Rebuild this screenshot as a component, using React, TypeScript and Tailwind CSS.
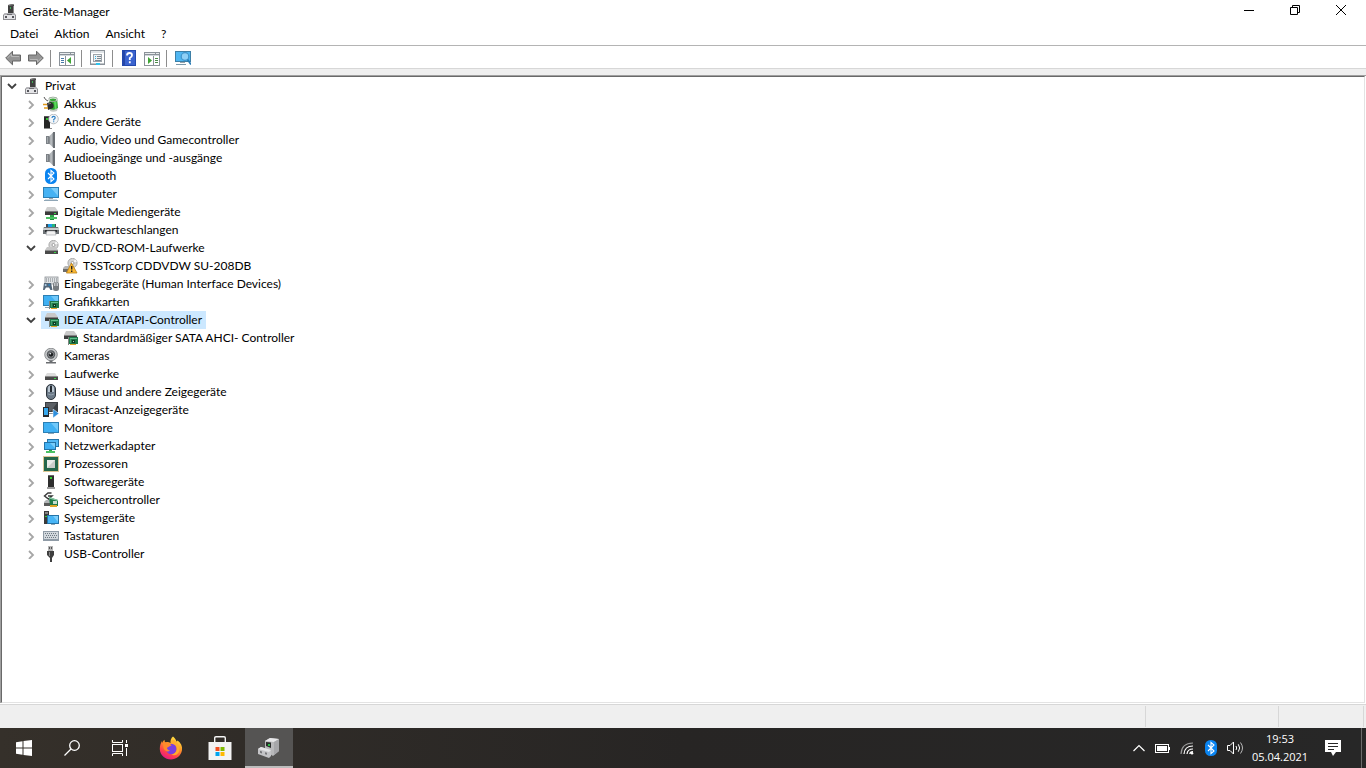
// src/App.tsx
import React, { useState } from 'react';

type Device = {
    name: string;
    icon: string;
    children?: Device[];
};

const devices: Device[] = [
    { name: 'Akkus', icon: 'battery', children: [] },
    { name: 'Andere Geräte', icon: 'unknown', children: [] },
    { name: 'Audio, Video und Gamecontroller', icon: 'speaker', children: [] },
    { name: 'Audioeingänge und -ausgänge', icon: 'speaker', children: [] },
    { name: 'Bluetooth', icon: 'bluetooth', children: [] },
    { name: 'Computer', icon: 'computer', children: [] },
    { name: 'Digitale Mediengeräte', icon: 'media', children: [] },
    { name: 'Druckwarteschlangen', icon: 'printer', children: [] },
    {
        name: 'DVD/CD-ROM-Laufwerke',
        icon: 'disc',
        children: [{ name: 'TSSTcorp CDDVDW SU-208DB', icon: 'discWarning' }],
    },
    { name: 'Eingabegeräte (Human Interface Devices)', icon: 'hid', children: [] },
    { name: 'Grafikkarten', icon: 'graphics', children: [] },
    {
        name: 'IDE ATA/ATAPI-Controller',
        icon: 'ide',
        children: [{ name: 'Standardmäßiger SATA AHCI- Controller', icon: 'ide' }],
    },
    { name: 'Kameras', icon: 'camera', children: [] },
    { name: 'Laufwerke', icon: 'drive', children: [] },
    { name: 'Mäuse und andere Zeigegeräte', icon: 'mouse', children: [] },
    { name: 'Miracast-Anzeigegeräte', icon: 'miracast', children: [] },
    { name: 'Monitore', icon: 'monitor', children: [] },
    { name: 'Netzwerkadapter', icon: 'network', children: [] },
    { name: 'Prozessoren', icon: 'cpu', children: [] },
    { name: 'Softwaregeräte', icon: 'software', children: [] },
    { name: 'Speichercontroller', icon: 'storage', children: [] },
    { name: 'Systemgeräte', icon: 'system', children: [] },
    { name: 'Tastaturen', icon: 'keyboard', children: [] },
    { name: 'USB-Controller', icon: 'usb', children: [] },
];

const root: Device = { name: 'Privat', icon: 'pc', children: devices };

// small green circuit board, shared by several icons
const Board = () => (
    <>
        <rect x="6" y="7" width="1" height="8" fill="#7f8580" />
        <rect x="7" y="7" width="9" height="7" fill="#1f7a4a" />
        <rect x="8" y="8" width="7" height="1" fill="#63bd8d" />
        <rect x="8" y="9" width="1" height="4" fill="#3f9c6c" />
        <rect x="10" y="10" width="3" height="3" fill="#0d3d24" />
        <rect x="11" y="11" width="1" height="1" fill="#9fd8b4" />
        <rect x="8" y="14" width="6" height="1" fill="#e0a526" />
    </>
);

const Disc = () => (
    <>
        <circle cx="10.5" cy="5" r="4.6" fill="#d6d6d6" stroke="#9a9a9a" strokeWidth="0.8" />
        <path d="M10.5 5 L13 1.2 A4.5 4.5 0 0 1 14.8 3.8Z" fill="#f7f7f7" />
        <circle cx="10.5" cy="5" r="1.5" fill="#fff" stroke="#8f8f8f" strokeWidth="0.8" />
    </>
);

const icons: Record<string, React.ReactNode> = {
    pc: (
        <>
            <path d="M6 1 L11 0 L12 1 V10 H6Z" fill="#3f3f3f" />
            <path d="M6 1 L11 0 L12 1 L7 2Z" fill="#777" />
            <path d="M11 2 H12 V9 H11Z" fill="#8a8a8a" />
            <rect x="8" y="3" width="1" height="2" fill="#3fae55" />
            <path d="M3 9 H12 L14 11 V16 H1 V11Z" fill="#8e8e92" />
            <path d="M3 9 H12 L13 11 H2Z" fill="#b4b4b8" />
            <rect x="2" y="11" width="11" height="4" fill="#e4e4e7" />
            <rect x="3" y="12" width="2" height="2" fill="#55555a" />
            <rect x="10" y="12" width="2" height="2" fill="#55555a" />
            <rect x="5" y="10" width="5" height="1" fill="#6f6f73" />
        </>
    ),
    battery: (
        <>
            <path d="M6 2 Q10 0 14 2 L15 12 Q11 16 7 14Z" fill="#2fa32f" />
            <path d="M6 2 Q10 0 14 2 V5 Q10 6 6 5Z" fill="#e4ebe4" stroke="#8b938b" strokeWidth="0.6" />
            <path d="M7 3 Q10 2 13 3 V4.4 Q10 5.4 7 4.4Z" fill="#37a837" />
            <path d="M11 6 L13.5 6 L13.5 13 L12 14Z" fill="#5ad95a" />
            <path d="M7 13 Q11 15 15 12 L14 15 Q10 16.5 7 15Z" fill="#c4c9c4" />
            <path d="M1 1 Q2 4 5 5" fill="none" stroke="#555" strokeWidth="1" />
            <path d="M4 7 L8 6 Q12 8 10 12 L5 14 Z" fill="#2b2b2b" />
            <path d="M0 8.5 H4 M1 12 H5" stroke="#e09a1c" strokeWidth="1.5" />
            <path d="M5 8 L8 7.4" stroke="#777" strokeWidth="1" />
        </>
    ),
    unknown: (
        <>
            <path d="M1 2 H7 V14 H1Z" fill="#262626" />
            <path d="M1 2 H7 V3 H1Z" fill="#5a5a5a" />
            <rect x="3" y="4" width="2" height="2" fill="#35c235" />
            <rect x="1" y="14" width="8" height="1" fill="#8c8c8c" />
            <circle cx="10.5" cy="5" r="4.8" fill="#f4f6f8" stroke="#a8adb2" strokeWidth="0.8" />
            <path d="M9 4 Q9 2.4 10.6 2.4 Q12.2 2.4 12.2 3.8 Q12.2 4.7 10.7 5.5 V6.4 M10.7 7.2 V8.2" fill="none" stroke="#2a7fc6" strokeWidth="1.1" />
        </>
    ),
    speaker: (
        <>
            <defs>
                <linearGradient id="cone" x1="0" y1="0" x2="1" y2="0">
                    <stop offset="0" stopColor="#74797e" />
                    <stop offset="0.5" stopColor="#c3c7ca" />
                    <stop offset="1" stopColor="#8d9297" />
                </linearGradient>
            </defs>
            <rect x="3" y="4" width="3" height="8" fill="#7c8186" />
            <rect x="4" y="5" width="1" height="6" fill="#a4a9ad" />
            <path d="M6 4.5 L10 0.5 V15.5 L6 11.5Z" fill="url(#cone)" />
            <path d="M10 0 H12 V16 H10Z" fill="#6b7075" />
        </>
    ),
    bluetooth: (
        <>
            <rect x="2" y="0" width="12" height="16" rx="5.5" fill="#0a84f0" />
            <path d="M5 5 L11 11 L8 13.6 V2.4 L11 5 L5 11" fill="none" stroke="#fff" strokeWidth="1.1" />
        </>
    ),
    computer: (
        <>
            <rect x="0" y="1" width="16" height="11" fill="#2c7fb4" />
            <rect x="1" y="2" width="14" height="9" fill="#46b2f3" />
            <path d="M8 2 H15 V10Z" fill="#7accfa" />
            <rect x="6" y="12" width="4" height="1" fill="#9aa3aa" />
            <rect x="1" y="14" width="14" height="1" fill="#8fa6b6" />
            <rect x="2" y="13" width="12" height="1" fill="#d2dbe2" />
        </>
    ),
    media: (
        <>
            <path d="M4 3 H12 L15 7 H2Z" fill="#cfcfcf" />
            <rect x="2" y="7" width="13" height="4" fill="#3b3b3b" />
            <rect x="2" y="7" width="13" height="1" fill="#777" />
            <rect x="11" y="9" width="2" height="1" fill="#38d548" />
            <rect x="7" y="11" width="4" height="3" fill="#2ea84a" />
            <rect x="3" y="13" width="11" height="2" fill="#4cc164" />
            <rect x="7" y="15" width="4" height="1" fill="#1f8b3b" />
        </>
    ),
    printer: (
        <>
            <rect x="3" y="2" width="10" height="3" fill="#3f4a54" />
            <rect x="5" y="2" width="4" height="3" fill="#1a9dea" />
            <rect x="9" y="2" width="3" height="3" fill="#24b47c" />
            <path d="M1 5 H15 L16 7 V12 H0 V7Z" fill="#6d7276" />
            <rect x="0" y="6" width="16" height="2" fill="#c9ccce" />
            <rect x="2" y="8" width="12" height="2" fill="#2d2f31" />
            <path d="M4 9 H12 L13 13 H3Z" fill="#f2f2f2" stroke="#9ba0a4" strokeWidth="0.6" />
        </>
    ),
    disc: (
        <>
            <Disc />
            <path d="M4 7 H13 L15 10 H2Z" fill="#c7c7c7" />
            <rect x="2" y="10" width="13" height="4" fill="#4a4a4a" />
            <rect x="2" y="10" width="13" height="1" fill="#8d8d8d" />
            <rect x="11" y="12" width="2" height="1" fill="#38d548" />
        </>
    ),
    discWarning: (
        <>
            <Disc />
            <path d="M3 8 H9 V14 H1 V10Z" fill="#b5b5b5" />
            <rect x="1" y="11" width="7" height="3" fill="#6d6d6d" />
            <path d="M9.5 5 L15 15 H4.4Z" fill="#fbb934" stroke="#b9801a" strokeWidth="0.8" />
            <path d="M9.7 8 V11.6 M9.7 12.6 V14" stroke="#222" strokeWidth="1.4" />
        </>
    ),
    hid: (
        <>
            <rect x="2" y="1" width="13" height="7" fill="#dfe2e4" stroke="#8c9195" strokeWidth="0.8" />
            <path d="M3 3 H14 M3 5 H14" stroke="#777d82" strokeWidth="1" strokeDasharray="1 1" />
            <path d="M1 7 H8 L9.5 14 H7.5 L6 11.5 H3 L1.5 14 H0Z" fill="#53677a" />
            <circle cx="2.6" cy="9" r="1" fill="#b6d4ea" />
            <circle cx="6.2" cy="9" r="1" fill="#2e80bb" />
            <rect x="10" y="6" width="6" height="9" rx="2.5" fill="#777c80" />
            <path d="M11.5 7 V10 M13 6 V10 M14.5 7 V10" stroke="#e1e4e6" strokeWidth="0.7" />
        </>
    ),
    graphics: (
        <>
            <rect x="0" y="1" width="16" height="11" fill="#2d7fb3" />
            <rect x="1" y="2" width="14" height="9" fill="#3fb0f3" />
            <path d="M8 2 H15 V10Z" fill="#70c8fa" />
            <rect x="2" y="13" width="5" height="1" fill="#8fa6b6" />
            <Board />
        </>
    ),
    ide: (
        <>
            <path d="M4 1 H12 L15 5 H2Z" fill="#c9c9c9" />
            <rect x="2" y="5" width="13" height="4" fill="#3f3f3f" />
            <rect x="2" y="5" width="13" height="1" fill="#858585" />
            <Board />
        </>
    ),
    camera: (
        <>
            <circle cx="8" cy="6.5" r="6.3" fill="#c6c8ca" stroke="#7a7d80" strokeWidth="0.8" />
            <circle cx="8" cy="6.5" r="4.2" fill="#54585c" />
            <circle cx="8" cy="6.5" r="2.7" fill="#1c1e20" stroke="#aeb2b5" strokeWidth="0.7" />
            <circle cx="7.3" cy="5.6" r="0.9" fill="#e3e8ec" />
            <path d="M6.5 12.5 H9.5 V14 H13 V15.4 H3 V14 H6.5Z" fill="#6a6d70" />
        </>
    ),
    drive: (
        <>
            <path d="M4 7 H12 L14 10 H2Z" fill="#dcdcdc" />
            <rect x="2" y="10" width="13" height="4" fill="#4a4a4a" />
            <rect x="2" y="10" width="13" height="1" fill="#8a8a8a" />
            <rect x="11" y="12" width="2" height="1" fill="#38d548" />
        </>
    ),
    mouse: (
        <>
            <rect x="3.5" y="0.5" width="9" height="15" rx="4.5" fill="#6b7987" stroke="#2d343b" />
            <path d="M5 4 Q5 2 7 1.6 V8 H5Z M11 4 Q11 2 9 1.6 V8 H11Z" fill="#b9c5d0" />
            <rect x="7" y="2" width="2" height="6" fill="#23292f" />
            <path d="M5 10 Q8 12 11 10" stroke="#94a2af" fill="none" />
        </>
    ),
    miracast: (
        <>
            <rect x="2" y="0" width="13" height="10" fill="#3b3f43" />
            <path d="M3 1 H14 L8 9 H3Z" fill="#5b6065" />
            <rect x="0" y="5" width="6" height="10" fill="#25292d" />
            <rect x="1" y="6" width="4" height="7" fill="#36a8ee" />
            <rect x="6" y="11" width="4" height="1" fill="#8e9398" />
            <path d="M10 7 L16 11.5 L10 16Z" fill="#2e8fdd" stroke="#fff" strokeWidth="0.5" />
        </>
    ),
    monitor: (
        <>
            <rect x="0" y="2" width="16" height="11" fill="#2c7fb4" />
            <rect x="1" y="3" width="14" height="9" fill="#3fb0f3" />
            <path d="M8 3 H15 V11Z" fill="#6fc8fa" />
            <rect x="5" y="13" width="6" height="1" fill="#8fa6b6" />
        </>
    ),
    network: (
        <>
            <rect x="4" y="1" width="12" height="8" fill="#2474a8" />
            <rect x="5" y="2" width="10" height="6" fill="#53b9f5" />
            <rect x="1" y="4" width="12" height="8" fill="#2474a8" />
            <rect x="2" y="5" width="10" height="6" fill="#3fb0f3" />
            <path d="M7 5 H12 V10Z" fill="#78cdfb" />
            <rect x="6" y="12" width="3" height="2" fill="#2ea84a" />
            <rect x="3" y="13" width="9" height="2" fill="#4cc164" />
        </>
    ),
    cpu: (
        <>
            <rect x="0.5" y="0.5" width="15" height="15" fill="none" stroke="#b98f2c" strokeDasharray="1 1" />
            <rect x="1" y="1" width="14" height="14" fill="#24664a" />
            <rect x="4" y="4" width="8" height="8" fill="#c9cdc9" />
            <path d="M4 4 H12 L4 12Z" fill="#e8ebe8" />
        </>
    ),
    software: (
        <>
            <rect x="5" y="1" width="6" height="12" fill="#2e2e2e" />
            <rect x="5" y="1" width="6" height="1" fill="#666" />
            <rect x="7" y="3" width="2" height="2" fill="#35d035" />
            <rect x="4" y="13" width="8" height="2" fill="#9c9c9c" />
        </>
    ),
    storage: (
        <>
            <path d="M8.5 1 H5 L1.5 4 L5.5 7 L9 4 H5" fill="none" stroke="#3a3a3a" strokeWidth="1.4" />
            <path d="M3 8 H8 V14 H1 V10Z" fill="#b2b5b7" />
            <rect x="1" y="11" width="6" height="3" fill="#5a5a5a" />
            <path d="M6 5 L15 8 V14 H7Z" fill="#1f7a4a" />
            <path d="M6 5 L15 8 V9 L6 6.5Z" fill="#8cc9a7" />
            <rect x="10" y="9" width="4" height="3" fill="#c3ddcf" />
            <rect x="7" y="13" width="7" height="2" fill="#e0a526" />
        </>
    ),
    system: (
        <>
            <rect x="1" y="1" width="5" height="13" fill="#3a3a3a" />
            <rect x="2" y="2" width="3" height="2" fill="#858585" />
            <rect x="2" y="6" width="2" height="1" fill="#35d035" />
            <rect x="4" y="5" width="12" height="9" fill="#2474a8" />
            <rect x="5" y="6" width="10" height="7" fill="#47b5f6" />
            <path d="M10 6 H15 V12Z" fill="#7dcffb" />
            <rect x="8" y="14" width="4" height="1" fill="#8fa6b6" />
        </>
    ),
    keyboard: (
        <>
            <rect x="0" y="3" width="16" height="10" fill="#8f9ba6" />
            <rect x="1" y="4" width="14" height="7" fill="#d2d8dd" />
            <path d="M2 5.5 H14 M2 9.5 H14" stroke="#6d7882" strokeDasharray="1 1" />
            <path d="M3 7.5 H14" stroke="#6d7882" strokeDasharray="1 1" />
        </>
    ),
    usb: (
        <>
            <rect x="5" y="0" width="5" height="5" fill="#b5b5b5" />
            <rect x="6" y="1" width="1" height="2" fill="#555" />
            <rect x="8" y="1" width="1" height="2" fill="#555" />
            <path d="M4 5 H11 V9 L9 12 V16 H7 V12 L4 9Z" fill="#3f3f3f" />
            <rect x="6" y="6" width="1" height="4" fill="#888" />
        </>
    ),
};

const Icon = ({ name }: { name: string }) => (
    <svg viewBox="0 0 16 16" className="h-4 w-4 shrink-0" aria-hidden="true">
        {icons[name]}
    </svg>
);

type TreeItemProps = {
    device: Device;
    selected: string;
    onSelect: (name: string) => void;
};

const TreeItem: React.FC<TreeItemProps> = ({ device, selected, onSelect }) => {
    const [open, setOpen] = useState(!!device.children && device.children.length > 0);

    return (
        <li>
            <div className="flex h-[18px] items-stretch">
                {device.children ? (
                    <button
                        onClick={() => setOpen(!open)}
                        aria-label={device.name}
                        aria-expanded={open}
                        className="flex w-[19px] items-center justify-center pr-px"
                    >
                        <svg viewBox="0 0 10 10" className="h-[10px] w-[10px]" fill="none" strokeWidth="1.8">
                            {open ? <path d="M1 3 L5 7 L9 3" stroke="#404040" /> : <path d="M3 2 L7 6 L3 10" stroke="#a6a6a6" />}
                        </svg>
                    </button>
                ) : (
                    <span className="w-[19px]" />
                )}
                <button
                    onClick={() => onSelect(device.name)}
                    className={`flex items-center gap-[5px] whitespace-nowrap pl-[2px] pr-1 ${selected === device.name ? 'bg-[#cce8ff]' : ''}`}
                >
                    <Icon name={device.icon} />
                    <span>{device.name}</span>
                </button>
            </div>
            {open && device.children && (
                <ul className="pl-[19px]">
                    {device.children.map((child) => (
                        <TreeItem key={child.name} device={child} selected={selected} onSelect={onSelect} />
                    ))}
                </ul>
            )}
        </li>
    );
};

const Separator = () => <span className="mr-2 ml-[6px] h-[17px] w-px bg-[#8d8d8d]" />;

const Arrow = ({ back }: { back?: boolean }) => (
    <svg viewBox="0 0 16 16" className={`h-4 w-4 ${back ? '' : 'rotate-180'}`}>
        <path d="M0.7 8 L7.5 1.2 V5 H15.5 V11 H7.5 V14.8Z" fill="#949494" stroke="#666" />
        <path d="M2.5 8 L6.5 4 V6.5 H14" fill="none" stroke="#b8b8b8" />
    </svg>
);

const Panel = ({ right }: { right?: boolean }) => (
    <svg viewBox="0 0 16 16" className="h-4 w-4">
        <rect x="0" y="2" width="16" height="14" fill="#8b9299" />
        <rect x="1" y="3" width="10" height="1" fill="#e8ebed" />
        <rect x="12" y="3" width="3" height="1" fill="#e8ebed" />
        <rect x="1" y="5" width="14" height="10" fill="#fff" />
        <rect x="1" y="5" width="14" height="1" fill="#cfd5da" />
        {right ? (
            <>
                <rect x="9" y="6" width="1" height="9" fill="#8b9299" />
                <path d="M4 7 L8 10.5 L4 14Z" fill="#3fa535" />
                <path d="M11 8.5 H14 M11 10.5 H14 M11 12.5 H14" stroke="#4b8a49" />
            </>
        ) : (
            <>
                <rect x="6" y="6" width="1" height="9" fill="#8b9299" />
                <path d="M12 7 L8 10.5 L12 14Z" fill="#3fa535" />
                <path d="M2 8.5 H5 M2 10.5 H5 M2 12.5 H5" stroke="#4678a8" />
            </>
        )}
    </svg>
);

const Toolbar = () => (
    <div className="flex h-[22px] items-center bg-white pt-[2px] pl-[5px]">
        <button aria-label="Zurück" className="mr-[7px]"><Arrow back /></button>
        <button aria-label="Vorwärts"><Arrow /></button>
        <Separator />
        <button aria-label="Konsolenstruktur ein-/ausblenden"><Panel /></button>
        <Separator />
        <button aria-label="Eigenschaften">
            <svg viewBox="0 0 16 16" className="h-4 w-4">
                <rect x="0.5" y="0.5" width="14" height="14" fill="#fff" stroke="#8b9299" />
                <rect x="1" y="1" width="13" height="2" fill="#dfe3e6" />
                <rect x="3.5" y="4.5" width="8" height="7" fill="#eef1f3" stroke="#9da4aa" />
                <path d="M5 6.5 H6 M5 8.5 H6" stroke="#2cb3e6" />
                <path d="M7 6.5 H11 M7 8.5 H11 M5 10.5 H11" stroke="#7c8790" />
                <rect x="1" y="13" width="13" height="1" fill="#c2c7cb" />
                <rect x="6" y="13" width="4" height="2" fill="#2cc3ee" />
            </svg>
        </button>
        <Separator />
        <button aria-label="Hilfe" className="mr-2 pl-px">
            <svg viewBox="0 0 14 16" className="h-4 w-[14px]">
                <rect width="14" height="16" fill="#2348ad" />
                <rect x="1" y="1" width="12" height="14" fill="#3a63cf" />
                <rect x="1" y="1" width="2" height="14" fill="#2547a8" />
                <path d="M5 5.5 Q5 3 7.5 3 Q10 3 10 5.3 Q10 7 7.8 8 V10 M7.8 11.2 V13.2" fill="none" stroke="#fff" strokeWidth="1.8" />
            </svg>
        </button>
        <button aria-label="Aktionsbereich ein-/ausblenden"><Panel right /></button>
        <Separator />
        <button aria-label="Nach geänderter Hardware suchen">
            <svg viewBox="0 0 16 16" className="h-4 w-4">
                <rect x="0" y="1" width="16" height="11" fill="#3d7fa6" />
                <rect x="1" y="2" width="14" height="9" fill="#4fb6f1" />
                <rect x="5" y="12" width="5" height="1" fill="#9aa3aa" />
                <rect x="1" y="14" width="10" height="1" fill="#7b98aa" />
                <circle cx="10" cy="6.5" r="3.8" fill="#8fd0f6" stroke="#3f93c9" strokeWidth="1.2" />
                <path d="M12.5 9.5 L16 14.5" stroke="#2b7cb5" strokeWidth="1.8" />
            </svg>
        </button>
    </div>
);

const Taskbar = () => (
    <footer className="flex h-10 shrink-0 items-stretch bg-gradient-to-r from-[#35302a] via-[#272524] to-[#272727] font-['Open_Sans',sans-serif] text-[11px] text-white">
        <button aria-label="Start" className="flex w-12 items-center justify-center">
            <svg viewBox="0 0 16 16" className="h-4 w-4" fill="#fff">
                <path d="M0 2.2 L6.5 1.3 V7.5 H0Z M7.5 1.1 L16 0 V7.5 H7.5Z M0 8.5 H6.5 V14.7 L0 13.8Z M7.5 8.5 H16 V16 L7.5 14.9Z" />
            </svg>
        </button>
        <button aria-label="Suche" className="flex w-12 items-center justify-center">
            <svg viewBox="0 0 16 16" className="h-4 w-4" fill="none" stroke="#fff" strokeWidth="1.3">
                <circle cx="10.5" cy="5.5" r="4.8" />
                <path d="M7 9 L0.5 15.5" />
            </svg>
        </button>
        <button aria-label="Aktive Anwendungen" className="flex w-12 items-center justify-center">
            <svg viewBox="0 0 16 16" className="h-4 w-4" fill="none" stroke="#fff">
                <rect x="0.5" y="4.5" width="10" height="7" />
                <path d="M0.5 0 V2.5 H10.5 V0 M0.5 16 V13.5 H10.5 V16 M14.5 0 V3 M14.5 8 V16" />
                <rect x="13" y="4" width="3" height="3" fill="#fff" stroke="none" />
            </svg>
        </button>
        <div className="flex gap-px pl-[3px]">
            <button aria-label="Firefox" className="flex w-12 items-center justify-center">
                <svg viewBox="0 0 24 24" className="h-6 w-6">
                    <defs>
                        <linearGradient id="fox" x1="0.8" y1="0" x2="0.3" y2="1">
                            <stop offset="0" stopColor="#fff14a" />
                            <stop offset="0.4" stopColor="#ff9a28" />
                            <stop offset="0.75" stopColor="#ff3f4c" />
                            <stop offset="1" stopColor="#e3168c" />
                        </linearGradient>
                    </defs>
                    <path d="M14 0.5 C16 2 17 4 17.5 5.5 C18.5 5 18.6 4.4 18.6 4.4 C22 7 23.5 10 23 14 C22 20 17 23.5 12 23.5 C6 23.5 1 19 0.8 13 C0.7 9.5 2 6.5 3 5 L3.3 7 C4 5.5 5 4 5.4 3.8 L6 6.5 C8 5.5 10 6 11.5 7 C11.2 4.5 12 2 14 0.5Z" fill="url(#fox)" />
                    <circle cx="12.3" cy="13" r="5.3" fill="#7a3fe0" />
                    <path d="M4 7 C7 5.5 10 6.5 12.5 9.5 C10.5 10 9.5 11.2 8 11.8 C8 13 9 14.5 11 14.5 C9 16.5 5.5 15 4.5 12Z" fill="#ff8a2b" />
                    <path d="M12 7.6 C15 6.5 18 9 17.8 13 C17.5 16 15 18.5 12 18.5 C17 21 21 17 20.5 12 C20 8 16 4 14 4 C12.5 5 12 6.5 12 7.6Z" fill="#ffad2e" />
                </svg>
            </button>
            <button aria-label="Microsoft Store" className="flex w-12 items-center justify-center">
                <svg viewBox="0 0 24 24" className="h-6 w-6">
                    <path d="M6.7 6.5 V2 Q6.7 0.7 8 0.7 H16 Q17.3 0.7 17.3 2 V6.5" fill="none" stroke="#f5f5f5" strokeWidth="1.4" />
                    <path d="M0.5 6 H23.5 V24 H0.5Z" fill="#f3f3f3" />
                    <rect x="7.5" y="11" width="4" height="4" fill="#f25022" />
                    <rect x="12.5" y="11" width="4" height="4" fill="#7fba00" />
                    <rect x="7.5" y="16" width="4" height="4" fill="#00a4ef" />
                    <rect x="12.5" y="16" width="4" height="4" fill="#ffb900" />
                </svg>
            </button>
            <button aria-label="Geräte-Manager öffnen" className="flex w-12 items-center justify-center border-b-2 border-[#bdbdbd] bg-[#555453] pt-[2px]">
                <svg viewBox="0 0 24 24" className="h-6 w-6">
                    <path d="M8 5 L13 2 L22 3 V15 L16 20 L8 15Z" fill="#b9b9bb" />
                    <path d="M8 5 L13 2 L22 3 L17 6Z" fill="#e6e6e8" />
                    <path d="M17 6 L22 3 V15 L17 19Z" fill="#a6a6a9" />
                    <path d="M9 6 L14 6.6 V12 L9 10Z" fill="#2a2c2b" />
                    <rect x="11" y="8" width="2" height="2" fill="#2dbb46" />
                    <path d="M1 13 L4 11 L14 14 V20 L12 22 L1 18Z" fill="#c4c4c7" />
                    <path d="M1 13 L4 11 L14 14 L12 16Z" fill="#e4e4e6" />
                    <path d="M3 14.8 L5 15.4 V17.4 L3 16.8Z M8 16.2 L10 16.8 V18.8 L8 18.2Z" fill="#77777a" />
                </svg>
            </button>
        </div>
        <div className="ml-auto flex items-center">
            <button aria-label="Ausgeblendete Symbole" className="flex w-6 justify-center">
                <svg viewBox="0 0 12 8" className="h-2 w-3" fill="none" stroke="#fff" strokeWidth="1.2">
                    <path d="M0.5 7 L6 1.5 L11.5 7" />
                </svg>
            </button>
            <button aria-label="Akku" className="flex w-6 justify-center">
                <svg viewBox="0 0 16 10" className="h-[10px] w-4" fill="none">
                    <rect x="0.5" y="1.5" width="13" height="8" stroke="#fff" />
                    <rect x="2" y="3" width="10" height="5" fill="#fff" />
                    <rect x="14" y="4" width="1" height="3" fill="#fff" />
                </svg>
            </button>
            <button aria-label="Netzwerk" className="flex w-6 justify-center">
                <svg viewBox="0 0 14 14" className="h-[14px] w-[14px]" fill="none" strokeWidth="1.2">
                    <path d="M1 13 Q1.5 2 13 2" stroke="#9a9a9a" />
                    <path d="M4 13 Q4.5 5 13 5 M7 13 Q7.5 8 13 8" stroke="#fff" />
                    <path d="M9.8 13 Q10 10.6 13 10.6" stroke="#fff" />
                    <circle cx="12" cy="12.3" r="1.3" fill="#fff" />
                </svg>
            </button>
            <button aria-label="Bluetooth-Geräte" className="flex w-6 justify-center"><Icon name="bluetooth" /></button>
            <button aria-label="Lautstärke" className="flex w-6 justify-center">
                <svg viewBox="0 0 16 14" className="h-[14px] w-4" fill="none" stroke="#fff">
                    <path d="M0.5 4.5 H3 L6.5 1 V13 L3 9.5 H0.5Z" />
                    <path d="M9 5 Q10.4 7 9 9 M11.3 3.3 Q14 7 11.3 10.7" />
                    <path d="M13.5 1.5 Q17.5 7 13.5 12.5" stroke="#bbb" />
                </svg>
            </button>
            <button className="w-[66px] text-center leading-[18px]">
                19:53
                <br />
                05.04.2021
            </button>
            <button aria-label="Benachrichtigungen" className="flex w-10 justify-center">
                <svg viewBox="0 0 16 16" className="h-4 w-4">
                    <path d="M0 0 H16 V12 H11 L8 16 L6 12 H0Z" fill="#fff" />
                    <path d="M3 3.5 H13 M3 6.5 H13 M3 9.5 H9" stroke="#272727" />
                </svg>
            </button>
            <button aria-label="Desktop anzeigen" className="ml-2 h-10 w-[5px] border-l border-[#6b6b6b]" />
        </div>
    </footer>
);

const App: React.FC = () => {
    const [selected, setSelected] = useState('IDE ATA/ATAPI-Controller');

    return (
        <div className="flex h-screen flex-col overflow-hidden bg-white font-[Lato,sans-serif] text-[12px] leading-4 text-black">
            <header className="flex h-[23px] items-center pl-[2px]">
                <Icon name="pc" />
                <h1 className="pl-[5px]">Geräte-Manager</h1>
                <div className="ml-auto flex h-full items-center pr-[2px] pb-[3px]">
                    <button aria-label="Minimieren" className="flex w-[46px] justify-center">
                        <svg viewBox="0 0 10 10" className="h-[10px] w-[10px]"><path d="M0 5.5 H10" stroke="#000" /></svg>
                    </button>
                    <button aria-label="Verkleinern" className="flex w-[46px] justify-center">
                        <svg viewBox="0 0 10 10" className="h-[10px] w-[10px]" fill="none" stroke="#000">
                            <path d="M0.5 2.5 H7.5 V9.5 H0.5Z M2.5 2 V0.5 H9.5 V7.5 H8" />
                        </svg>
                    </button>
                    <button aria-label="Schließen" className="flex w-[46px] justify-center">
                        <svg viewBox="0 0 10 10" className="h-[10px] w-[10px]" stroke="#000"><path d="M0 0 L10 10 M10 0 L0 10" /></svg>
                    </button>
                </div>
            </header>
            <nav className="flex h-[23px] items-center gap-4 border-b border-[#b4b4b4] pl-[10px]">
                <button>Datei</button>
                <button>Aktion</button>
                <button>Ansicht</button>
                <button>?</button>
            </nav>
            <Toolbar />
            <div className="h-[7px] shrink-0 border-t border-[#d7d7d7] bg-[#efefef]" />
            <main className="min-h-0 flex-1 overflow-hidden border-t border-l border-[#a0a0a0] pr-px">
                <div className="h-full overflow-hidden border-t border-r border-b border-l border-t-[#696969] border-r-[#e3e3e3] border-b-[#e3e3e3] border-l-[#696969]">
                    <ul className="pl-px">
                        <TreeItem device={root} selected={selected} onSelect={setSelected} />
                    </ul>
                </div>
            </main>
            <div className="mt-px flex h-6 shrink-0 justify-end border-t border-[#d7d7d7] bg-[#efefef] pt-px pb-px">
                <span className="w-[133px] border-l border-[#d7d7d7]" />
                <span className="w-[85px] border-l border-[#d7d7d7]" />
                <span className="w-[3px] border-l border-[#d7d7d7]" />
            </div>
            <Taskbar />
        </div>
    );
};

export default App;
